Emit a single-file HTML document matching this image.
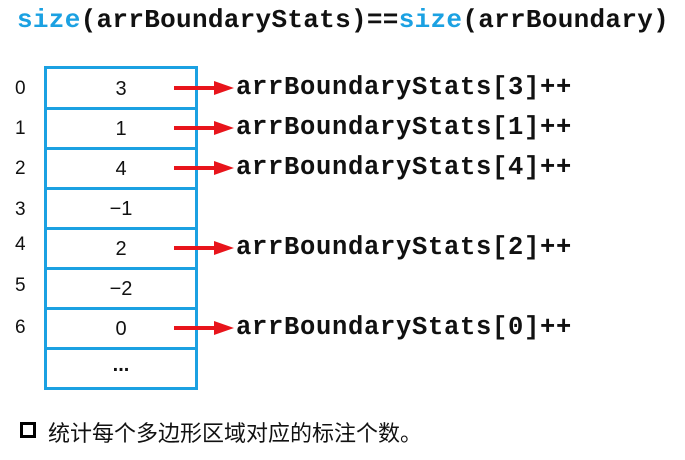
<!DOCTYPE html>
<html><head><meta charset="utf-8"><style>
body{margin:0;width:685px;height:460px;background:#fff;position:relative;overflow:hidden;font-family:"Liberation Sans",sans-serif}
.h{position:absolute;left:17px;top:5px;font:bold 26px "Liberation Mono",monospace;color:#111;white-space:nowrap;letter-spacing:0.3px}
.b{color:#1ba1e2}
.box{position:absolute;left:44px;top:66px;width:148px;height:318px;border:3px solid #1ba1e2}
.row{position:absolute;left:0;width:148px;height:40px;text-align:center;line-height:40px;font-size:20px;color:#111}
.line{position:absolute;left:0;width:148px;height:3px;background:#1ba1e2}
.idx{position:absolute;left:15px;font-size:19px;color:#111}
.lab{position:absolute;left:236px;font:bold 25.5px "Liberation Mono",monospace;color:#111;white-space:nowrap;letter-spacing:0.7px}
.ar{position:absolute;left:174px}
.ft{position:absolute;left:48px;top:416px;font-size:22px;font-family:"Liberation Sans","Noto Sans CJK SC",sans-serif;color:#111}
.sq{position:absolute;left:20px;top:422px;width:10px;height:10px;border:3px solid #000}
</style></head><body>
<div class="h"><span class="b">size</span>(arrBoundaryStats)==<span class="b">size</span>(arrBoundary)</div>
<div class="box">
<div class="row" style="top:0">3</div>
<div class="line" style="top:38px"></div>
<div class="row" style="top:40px">1</div>
<div class="line" style="top:78px"></div>
<div class="row" style="top:80px">4</div>
<div class="line" style="top:118px"></div>
<div class="row" style="top:120px">−1</div>
<div class="line" style="top:158px"></div>
<div class="row" style="top:160px">2</div>
<div class="line" style="top:198px"></div>
<div class="row" style="top:200px">−2</div>
<div class="line" style="top:238px"></div>
<div class="row" style="top:240px">0</div>
<div class="line" style="top:278px"></div>
<div class="row" style="top:276px;font-weight:bold">...</div>
</div>
<div class="idx" style="top:78px">0</div>
<div class="idx" style="top:118px">1</div>
<div class="idx" style="top:158px">2</div>
<div class="idx" style="top:199px">3</div>
<div class="idx" style="top:234px">4</div>
<div class="idx" style="top:275px">5</div>
<div class="idx" style="top:317px">6</div>
<svg class="ar" style="top:80px" width="60" height="16"><path d="M0 8H44" stroke="#e8141b" stroke-width="4"/><path d="M40 1L60 8L40 15Z" fill="#e8141b"/></svg>
<div class="lab" style="top:73px">arrBoundaryStats[3]++</div>
<svg class="ar" style="top:120px" width="60" height="16"><path d="M0 8H44" stroke="#e8141b" stroke-width="4"/><path d="M40 1L60 8L40 15Z" fill="#e8141b"/></svg>
<div class="lab" style="top:113px">arrBoundaryStats[1]++</div>
<svg class="ar" style="top:160px" width="60" height="16"><path d="M0 8H44" stroke="#e8141b" stroke-width="4"/><path d="M40 1L60 8L40 15Z" fill="#e8141b"/></svg>
<div class="lab" style="top:153px">arrBoundaryStats[4]++</div>
<svg class="ar" style="top:240px" width="60" height="16"><path d="M0 8H44" stroke="#e8141b" stroke-width="4"/><path d="M40 1L60 8L40 15Z" fill="#e8141b"/></svg>
<div class="lab" style="top:233px">arrBoundaryStats[2]++</div>
<svg class="ar" style="top:320px" width="60" height="16"><path d="M0 8H44" stroke="#e8141b" stroke-width="4"/><path d="M40 1L60 8L40 15Z" fill="#e8141b"/></svg>
<div class="lab" style="top:313px">arrBoundaryStats[0]++</div>
<div class="sq"></div>
<div class="ft">统计每个多边形区域对应的标注个数。</div>
</body></html>
